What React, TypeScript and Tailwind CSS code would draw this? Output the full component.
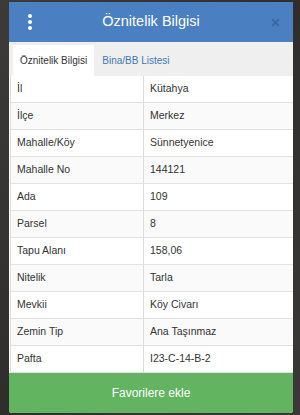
import { X } from "lucide-react";

const rows: [string, string][] = [
  ["İl", "Kütahya"],
  ["İlçe", "Merkez"],
  ["Mahalle/Köy", "Sünnetyenice"],
  ["Mahalle No", "144121"],
  ["Ada", "109"],
  ["Parsel", "8"],
  ["Tapu Alanı", "158,06"],
  ["Nitelik", "Tarla"],
  ["Mevkii", "Köy Civarı"],
  ["Zemin Tip", "Ana Taşınmaz"],
  ["Pafta", "I23-C-14-B-2"],
];

export default function App() {
  return (
    <div
      className="w-[300px] h-[415px] overflow-hidden bg-gradient-to-br from-[#3d3b38] via-[#2f2e2c] to-[#3a3936] pt-[2px] pl-[9px] pr-[7px]"
      style={{ fontFamily: '"Liberation Sans", Arial, sans-serif' }}
    >
      <div className="w-[284px] bg-white rounded-b-[3px] overflow-hidden">
        {/* header */}
        <div className="h-[40px] bg-[#4a7fc1] grid grid-cols-[40px_1fr_40px] items-center">
          <div className="flex flex-col gap-[2px] items-center pl-[1px]">
            <span className="w-[4px] h-[4px] rounded-full bg-white"></span>
            <span className="w-[4px] h-[4px] rounded-full bg-white"></span>
            <span className="w-[4px] h-[4px] rounded-full bg-white"></span>
          </div>
          <h1 className="text-white text-[14.5px] text-center">Öznitelik Bilgisi</h1>
          <div className="flex justify-center pl-[4px]">
            <X className="w-[11px] h-[11px] text-[#3a69a5]" strokeWidth={4.5} />
          </div>
        </div>

        {/* tabs */}
        <div className="h-[34px] bg-[#efefef] flex items-end pl-[4px]">
          <div className="h-[31px] bg-white px-[7px] flex items-center text-[10px] text-[#333]">
            Öznitelik Bilgisi
          </div>
          <div className="h-[31px] px-[8px] flex items-center text-[10px] text-[#3a79b8]">
            Bina/BB Listesi
          </div>
        </div>

        {/* table */}
        <div className="border-l border-[#dcdcdc] ml-[1px]">
          {rows.map(([k, v], i) => (
            <div
              key={k}
              className={
                "grid grid-cols-[133px_1fr] h-[27px] border-b border-[#e2e2e2] text-[10.5px] text-[#333] " +
                (i % 2 === 0 ? "bg-white" : "bg-[#fafafa]")
              }
            >
              <div className="flex items-center pl-[6px] border-r border-[#dcdcdc]">{k}</div>
              <div className="flex items-center pl-[6px]">{v}</div>
            </div>
          ))}
        </div>

        {/* button */}
        <button className="w-full h-[40px] bg-[#62b460] text-white text-[12px] flex items-center justify-center">
          Favorilere ekle
        </button>
      </div>
    </div>
  );
}
